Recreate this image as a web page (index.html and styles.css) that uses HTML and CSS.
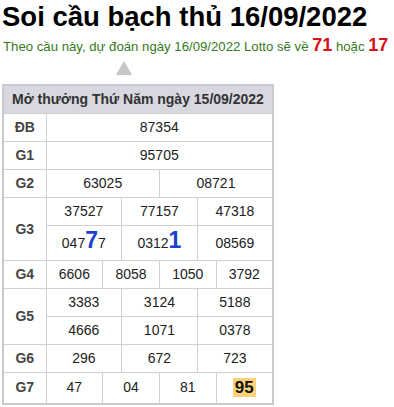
FILE: index.html
```html
<!DOCTYPE html>
<html lang="vi">
<head>
<meta charset="utf-8">
<link rel="stylesheet" href="styles.css">
</head>
<body>
<h1 class="title">Soi cầu bạch thủ 16/09/2022</h1>
<p class="lead">Theo cầu này, dự đoán ngày 16/09/2022 Lotto sẽ về <b class="hot">71</b> hoặc <b class="hot">17</b></p>
<div class="arrow"></div>
<table class="kq">
  <colgroup><col class="c-lbl"><col span="12" class="c-num"></colgroup>
  <tr><th colspan="13" class="head">Mở thưởng Thứ Năm ngày 15/09/2022</th></tr>
  <tr><td class="lbl">ĐB</td><td colspan="12">87354</td></tr>
  <tr><td class="lbl">G1</td><td colspan="12">95705</td></tr>
  <tr><td class="lbl">G2</td><td colspan="6">63025</td><td colspan="6">08721</td></tr>
  <tr><td class="lbl" rowspan="2">G3</td><td colspan="4">37527</td><td colspan="4">77157</td><td colspan="4">47318</td></tr>
  <tr class="tall"><td colspan="4">047<span class="big">7</span>7</td><td colspan="4">0312<span class="big">1</span></td><td colspan="4">08569</td></tr>
  <tr><td class="lbl">G4</td><td colspan="3">6606</td><td colspan="3">8058</td><td colspan="3">1050</td><td colspan="3">3792</td></tr>
  <tr><td class="lbl" rowspan="2">G5</td><td colspan="4">3383</td><td colspan="4">3124</td><td colspan="4">5188</td></tr>
  <tr><td colspan="4">4666</td><td colspan="4">1071</td><td colspan="4">0378</td></tr>
  <tr><td class="lbl">G6</td><td colspan="4">296</td><td colspan="4">672</td><td colspan="4">723</td></tr>
  <tr class="last"><td class="lbl">G7</td><td colspan="3">47</td><td colspan="3">04</td><td colspan="3">81</td><td colspan="3"><span class="mark">95</span></td></tr>
</table>
</body>
</html>
```
FILE: styles.css
```css
html, body {
  margin: 0;
  padding: 0;
  background: #fff;
}
body {
  padding: 0 2px;
  font-family: "Liberation Sans", Arial, sans-serif;
  color: #222;
}
.title {
  margin: 0;
  padding-top: 1px;
  font-size: 27.5px;
  line-height: 32px;
  font-weight: bold;
  color: #000;
}
.lead {
  margin: 2px 0 0 1px;
  font-size: 13.2px;
  line-height: 20px;
  color: #357a22;
}
.hot {
  color: #d7101a;
  font-size: 18px;
}
.arrow {
  width: 0;
  height: 0;
  margin: 4px 0 9px 114px;
  border-left: 8px solid transparent;
  border-right: 8px solid transparent;
  border-bottom: 14px solid #c6c6c6;
}
.kq {
  width: 272px;
  border-collapse: collapse;
  border: 2px solid #c9c9cf;
  font-size: 14px;
  table-layout: fixed;
}
.c-lbl {
  width: 43px;
}
.kq td, .kq th {
  border: 1px solid #cfcfd4;
  text-align: center;
  padding: 5px 0;
  line-height: 17px;
  color: #222;
  overflow: hidden;
  white-space: nowrap;
}
.kq .head {
  background: #d8d8e0;
  font-weight: bold;
  color: #333;
  padding: 5px 0;
  font-size: 14px;
}
.kq .lbl {
  font-weight: bold;
  color: #454545;
}
.tall td {
  padding: 8px 0;
  line-height: 18px;
}
.big {
  font-size: 23px;
  line-height: 0;
  font-weight: bold;
  color: #1b3fd1;
}
.last td {
  padding: 5px 0 6px;
}
.mark {
  display: inline-block;
  background: #fbd27a;
  font-weight: bold;
  font-size: 17px;
  line-height: 19px;
  padding: 0 2px;
  color: #111;
  vertical-align: middle;
}
```
